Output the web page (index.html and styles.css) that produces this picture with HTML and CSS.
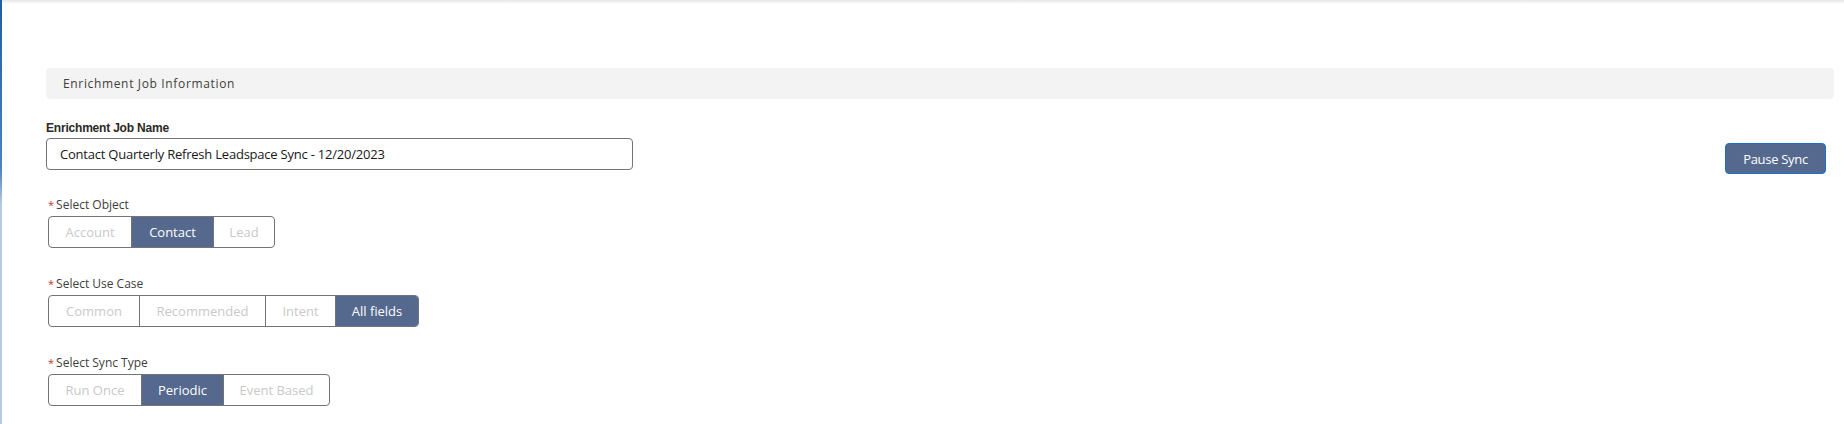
FILE: index.html
```html
<!DOCTYPE html>
<html>
<head>
<meta charset="utf-8">
<link rel="stylesheet" href="styles.css">
</head>
<body>
<div class="page">
  <div class="strip"></div>
  <div class="main">
    <div class="topshadow"></div>
    <div class="content">
      <div class="section-header">Enrichment Job Information</div>
      <div class="name-row">
        <div class="field">
          <label class="field-label">Enrichment Job Name</label>
          <div class="input">Contact Quarterly Refresh Leadspace Sync - 12/20/2023</div>
        </div>
        <button class="pause">Pause Sync</button>
      </div>
      <div class="group-block first">
        <div class="req-label"><span class="star">*</span>Select Object</div>
        <div class="seg">
          <span class="opt w-account">Account</span>
          <span class="opt on w-contact">Contact</span>
          <span class="opt w-lead">Lead</span>
        </div>
      </div>
      <div class="group-block">
        <div class="req-label"><span class="star">*</span>Select Use Case</div>
        <div class="seg">
          <span class="opt w-common">Common</span>
          <span class="opt w-rec">Recommended</span>
          <span class="opt w-intent">Intent</span>
          <span class="opt on w-all">All fields</span>
        </div>
      </div>
      <div class="group-block">
        <div class="req-label"><span class="star">*</span>Select Sync Type</div>
        <div class="seg">
          <span class="opt w-run">Run Once</span>
          <span class="opt on w-periodic">Periodic</span>
          <span class="opt w-event">Event Based</span>
        </div>
      </div>
    </div>
  </div>
</div>
</body>
</html>
```
FILE: styles.css
```css
* { box-sizing: border-box; }
html, body { margin: 0; padding: 0; background: #fff; }
body { font-family: "Open Sans", "Liberation Sans", sans-serif; color: #181818; }
.page { display: flex; height: 424px; overflow: hidden; }
.strip { width: 2px; flex: none; background: linear-gradient(#1d5fa3 0%, #4b84c0 40%, #b5c8e4 48%, #b5c8e4 100%); }
.main { flex: 1; position: relative; }
.topshadow { position: absolute; left: 0; right: 0; top: 0; height: 4px; background: linear-gradient(#e6e6e6, #ffffff); }
.content { padding: 68px 10px 0 44px; }
.section-header { height: 31px; background: #f3f3f3; border-radius: 4px; padding-left: 17px; font-size: 12px; letter-spacing: 0.65px; line-height: 31px; color: #3e3e3c; }
.name-row { display: flex; justify-content: space-between; align-items: flex-end; margin-top: 21px; }
.field { display: flex; flex-direction: column; }
.field-label { font-family: "Liberation Sans", sans-serif; font-weight: bold; font-size: 12px; line-height: 16px; color: #2b2826; letter-spacing: -0.2px; margin-bottom: 2px; }
.input { width: 587px; height: 32px; border: 1px solid #747474; border-radius: 4px; padding-left: 13px; font-size: 13px; line-height: 30px; color: #181818; letter-spacing: -0.22px; }
.pause { width: 101px; height: 31px; margin-right: 8px; margin-bottom: -4px; background: #54698d; color: #fff; border: 1px solid #1b6ecb; border-radius: 4px; font-family: "Open Sans", sans-serif; font-size: 13px; letter-spacing: -0.3px; padding: 0; }
.group-block { margin-top: 28px; padding-left: 2px; }
.group-block.first { margin-top: 27px; }
.req-label { font-size: 12px; line-height: 16px; color: #3e3e3c; margin-bottom: 3px; }
.star { color: #c23934; margin-right: 2px; font-size: 11px; }
.seg { display: inline-flex; border: 1px solid #747474; border-radius: 4px; height: 32px; overflow: hidden; }
.opt { display: flex; align-items: center; justify-content: center; font-size: 13px; color: #c9c9c9; border-left: 1px solid #747474; }
.opt:first-child { border-left: none; }
.opt.on { background: #54698d; color: #fff; font-weight: 500; }
.w-account { width: 82px; }
.w-contact { width: 82px; }
.w-lead { width: 61px; }
.w-common { width: 90px; }
.w-rec { width: 126px; }
.w-intent { width: 70px; }
.w-all { width: 83px; }
.w-run { width: 92px; }
.w-periodic { width: 82px; }
.w-event { width: 106px; }
```
